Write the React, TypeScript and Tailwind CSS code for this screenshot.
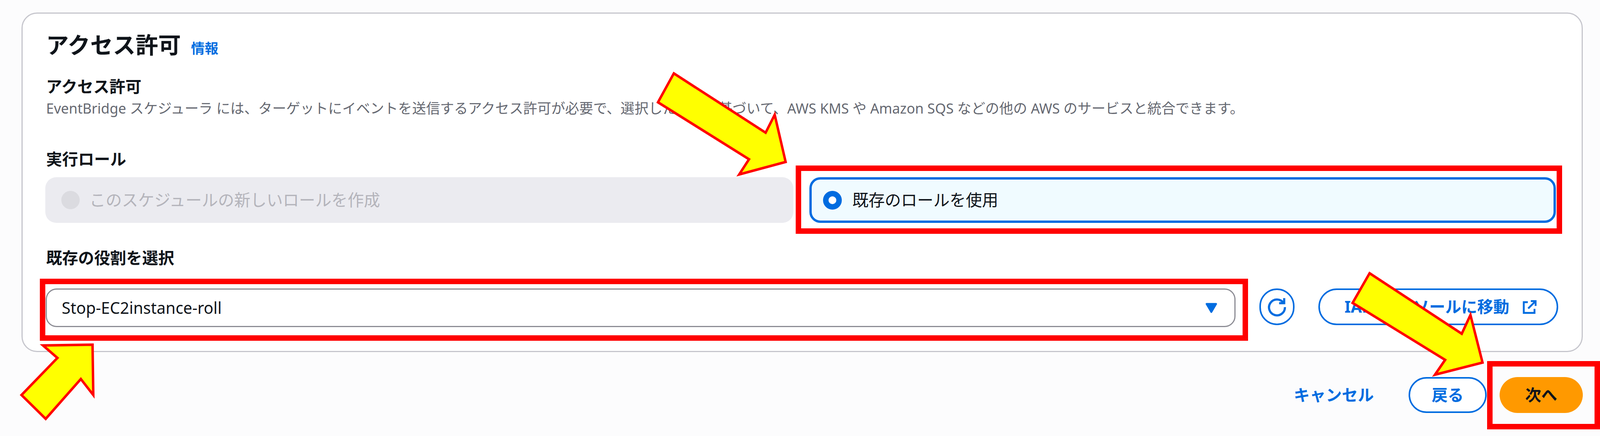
const arrows = [
  "1784,188 2027,340 2051,294 2080,415 1957,447 1983,408 1742,262",
  "114,885 245,883 247,1012 214,971 121,1073 57,1012 152,917",
  "3626,700 3870,855 3893,807 3925,929 3799,960 3826,922 3581,776",
];

function RedBox({ className }: { className: string }) {
  return <div className={"absolute border-[14px] border-[#ff0000] " + className} />;
}

export default function App() {
  return (
    <div className="relative w-full h-[1117px] overflow-hidden bg-[#fcfcfd] pt-[32px] pl-[55px] pr-[44px] text-[#0f141a] font-['Noto_Sans','Noto_Sans_CJK_JP',sans-serif]">
      {/* Permissions card */}
      <div className="h-[870px] bg-white border-[3px] border-[#c6c6cd] rounded-[40px] pt-[44px] pl-[58px]">
        <div className="flex items-baseline gap-[26px]">
          <h2 className="text-[58px] leading-[72px] font-bold pl-[2px]">アクセス許可</h2>
          <a className="text-[35px] leading-[44px] font-bold text-[#006ce0]">情報</a>
        </div>

        <div className="mt-[45px] text-[41px] leading-[50px] font-bold pl-[2px]">アクセス許可</div>
        <p className="mt-[9px] text-[35.8px] leading-[44px] text-[#656871] pl-[2px]">
          EventBridge スケジューラ には、ターゲットにイベントを送信するアクセス許可が必要で、選択した内容に基づいて、AWS KMS や Amazon SQS などの他の AWS のサービスと統合できます。
        </p>

        <div className="mt-[83px] text-[41px] leading-[50px] font-bold pl-[2px]">実行ロール</div>
        <div className="mt-[22px] w-[3867px] grid grid-cols-[1915px_1fr] gap-[41px]">
          <div className="h-[117px] rounded-[28px] bg-[#ebebf0] flex items-center pl-[41px] gap-[25px]">
            <span className="w-[47px] h-[47px] rounded-full bg-[#dbdbe0]" />
            <span className="text-[41.5px] text-[#b4b4bb]">このスケジュールの新しいロールを作成</span>
          </div>
          <div className="h-[117px] rounded-[28px] bg-[#f0fbff] border-[6px] border-[#006ce0] flex items-center pl-[29px] gap-[27px]">
            <span className="w-[48px] h-[48px] rounded-full border-[14px] border-[#006ce0] bg-white" />
            <span className="text-[41.5px]">既存のロールを使用</span>
          </div>
        </div>

        <div className="mt-[64px] text-[41px] leading-[50px] font-bold pl-[2px]">既存の役割を選択</div>
        <div className="mt-[54px] w-[3873px] flex items-start">
          <div className="ml-[1px] flex-1 h-[99px] rounded-[28px] border-[3px] border-[#8c8c94] flex items-center justify-between pl-[38px] pr-[43px]">
            <span className="text-[41px]">Stop-EC2instance-roll</span>
            <svg width="32" height="30" viewBox="0 0 34 30">
              <polygon points="4,4 30,4 17,26" fill="#006ce0" stroke="#006ce0" strokeWidth="5" strokeLinejoin="round" />
            </svg>
          </div>
          <button className="ml-[61px] w-[90px] h-[94px] rounded-full border-[4px] border-[#006ce0] flex items-center justify-center">
            <svg width="50" height="52" viewBox="0 0 54 54" fill="none" stroke="#006ce0" strokeWidth="6">
              <path d="M45 16A22 22 0 1 0 49 28" />
              <path d="M47 3V17H33" />
            </svg>
          </button>
          <button className="ml-[61px] w-[614px] h-[94px] rounded-full border-[4px] border-[#006ce0] flex items-center pl-[63px] text-[41px] font-bold text-[#006ce0]">
            <span>IAM コンソールに移動</span>
            <svg className="ml-[34px]" width="36" height="37" viewBox="0 0 38 38" fill="none" stroke="#006ce0" strokeWidth="5">
              <path d="M14 6H3V35H32V24" />
              <path d="M22 3H35V16" />
              <path d="M35 3L15 23" />
            </svg>
          </button>
        </div>
      </div>

      {/* Wizard actions */}
      <div className="mt-[64px] flex justify-end items-center">
        <a className="text-[41px] font-bold text-[#006ce0]">キャンセル</a>
        <button className="ml-[89px] w-[200px] h-[92px] rounded-full border-[4px] border-[#006ce0] bg-white text-[41px] font-bold text-[#006ce0]">戻る</button>
        <button className="ml-[33px] w-[213px] h-[92px] rounded-full bg-[#ff9900] text-[41px] font-bold">次へ</button>
      </div>

      {/* Annotations */}
      <RedBox className="left-[49.74%] top-[424px] w-[47.88%] h-[175px]" />
      <RedBox className="left-[2.5%] top-[714px] w-[75.5%] h-[159px]" />
      <RedBox className="left-[92.94%] right-0 top-[925px] h-[175px]" />
      <svg className="absolute inset-0 w-full h-full" viewBox="0 0 4236 1117" preserveAspectRatio="none">
        {arrows.map((points) => (
          <polygon key={points} points={points} fill="#ffff00" stroke="#ff0000" strokeWidth="6.5" strokeLinejoin="miter" strokeMiterlimit="10" />
        ))}
      </svg>
    </div>
  );
}
